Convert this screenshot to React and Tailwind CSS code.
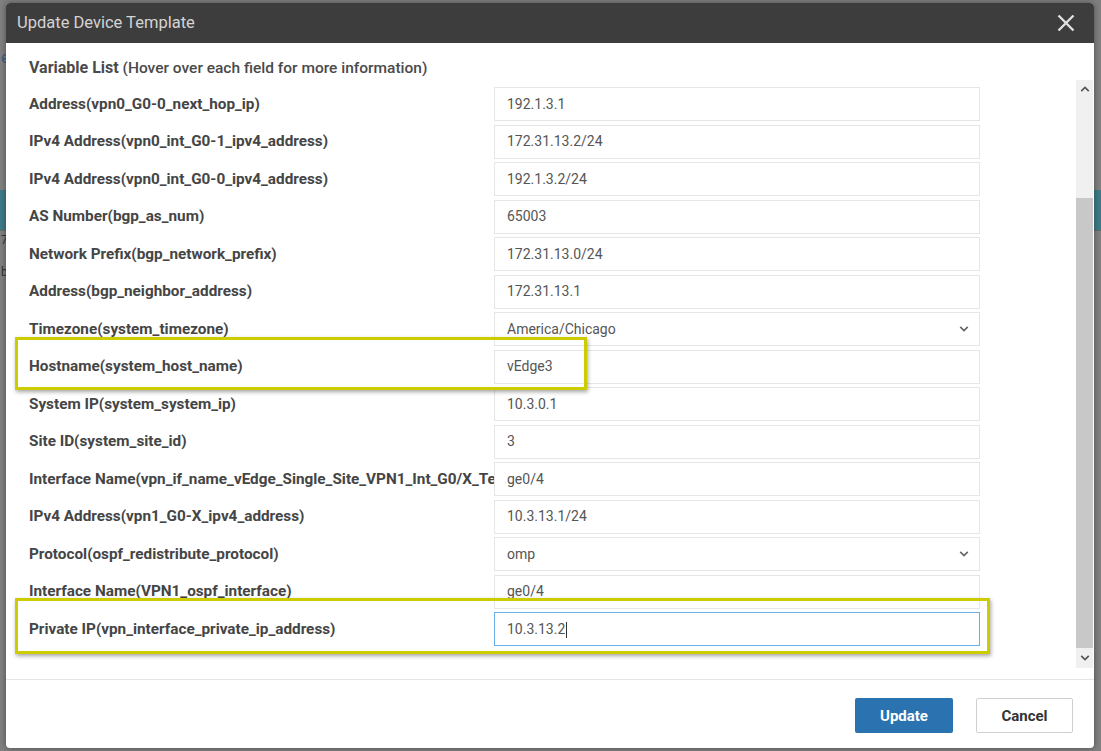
import React from "react";

const rows = [
  { label: "Address(vpn0_G0-0_next_hop_ip)", value: "192.1.3.1" },
  { label: "IPv4 Address(vpn0_int_G0-1_ipv4_address)", value: "172.31.13.2/24" },
  { label: "IPv4 Address(vpn0_int_G0-0_ipv4_address)", value: "192.1.3.2/24" },
  { label: "AS Number(bgp_as_num)", value: "65003" },
  { label: "Network Prefix(bgp_network_prefix)", value: "172.31.13.0/24" },
  { label: "Address(bgp_neighbor_address)", value: "172.31.13.1" },
  { label: "Timezone(system_timezone)", value: "America/Chicago", select: true },
  { label: "Hostname(system_host_name)", value: "vEdge3" },
  { label: "System IP(system_system_ip)", value: "10.3.0.1" },
  { label: "Site ID(system_site_id)", value: "3" },
  { label: "Interface Name(vpn_if_name_vEdge_Single_Site_VPN1_Int_G0/X_Template)", value: "ge0/4" },
  { label: "IPv4 Address(vpn1_G0-X_ipv4_address)", value: "10.3.13.1/24" },
  { label: "Protocol(ospf_redistribute_protocol)", value: "omp", select: true },
  { label: "Interface Name(VPN1_ospf_interface)", value: "ge0/4" },
  { label: "Private IP(vpn_interface_private_ip_address)", value: "10.3.13.2", focus: true },
];

function Chevron({ dir = "down", className = "" }) {
  return (
    <svg width="12" height="8" viewBox="0 0 12 8" className={className}>
      {dir === "down" ? (
        <path d="M1.5 1.5 L6 6 L10.5 1.5" fill="none" stroke="currentColor" strokeWidth="2" />
      ) : (
        <path d="M1.5 6.5 L6 2 L10.5 6.5" fill="none" stroke="currentColor" strokeWidth="2" />
      )}
    </svg>
  );
}

export default function App() {
  return (
    <div
      className="relative w-[1101px] h-[751px] overflow-hidden bg-[#808080]"
      style={{ fontFamily: "Roboto, 'Noto Sans', sans-serif" }}
    >
      {/* dimmed page behind */}
      <div className="absolute left-0 top-[190px] w-full h-[40px] bg-[#3f7a88]" />
      <div className="absolute left-0 top-[230px] w-full h-[1px] bg-[#6a6a6a]" />
      <div className="absolute left-[1px] top-[48px] text-[16px] leading-[20px] text-[#3a5f86]">e</div>
      <div className="absolute left-[1px] top-[232px] text-[12px] leading-[16px] text-[#333]">7</div>
      <div className="absolute left-[1px] top-[264px] text-[12px] leading-[16px] text-[#333]">b</div>

      {/* modal */}
      <div className="absolute left-[6px] top-[3px] w-[1088px] h-[745px] bg-white rounded-[4px] shadow-[0_0_6px_rgba(0,0,0,0.4)] flex flex-col overflow-hidden">
        <div className="h-[40px] shrink-0 bg-[#3d3d3d] flex items-center justify-between pl-[11px] pr-[19px]">
          <span className="text-[16.5px] text-[#d4d4d4]">Update Device Template</span>
          <svg width="18" height="18" viewBox="0 0 18 18">
            <path d="M1.5 1.5 L16.5 16.5 M16.5 1.5 L1.5 16.5" stroke="#e0e0e0" strokeWidth="2.4" />
          </svg>
        </div>

        <div className="h-[37px] shrink-0 pl-[23px] pt-[15px] leading-[20px] text-[#4a4a4a]">
          <span className="text-[16px] font-bold">Variable List</span>
          <span className="text-[15.5px] font-medium"> (Hover over each field for more information)</span>
        </div>

        <div className="relative h-[588px] shrink-0 flex">
          <div className="flex-1 overflow-hidden pl-[23px] pt-[7px] flex flex-col gap-[3.5px]">
            {rows.map((r) => (
              <div key={r.label} className="flex items-center h-[34px] shrink-0">
                <div className="w-[465px] shrink-0 overflow-hidden whitespace-nowrap text-[15.3px] font-bold text-[#454545]">
                  {r.label}
                </div>
                <div
                  className={
                    "w-[486px] h-[34px] shrink-0 flex items-center justify-between pl-[12px] pr-[10px] text-[14px] text-[#555] bg-white border " +
                    (r.focus ? "border-[#66afe9]" : "border-[#e6e6e6]")
                  }
                >
                  <span>
                    {r.value}
                    {r.focus && <span className="inline-block w-[1px] h-[16px] bg-[#333] align-middle ml-[1px]" />}
                  </span>
                  {r.select && <Chevron className="text-[#666] w-[10px]" />}
                </div>
              </div>
            ))}
          </div>

          {/* scrollbar */}
          <div className="w-[17px] mr-[1px] shrink-0 bg-[#f0f0f0] flex flex-col">
            <div className="h-[17px] flex items-center justify-center text-[#555]">
              <Chevron dir="up" className="w-[10px]" />
            </div>
            <div className="h-[101px]" />
            <div className="h-[450px] bg-[#c8c8c8]" />
            <div className="flex-1 flex items-center justify-center text-[#555]">
              <Chevron className="w-[10px]" />
            </div>
          </div>

          {/* highlight boxes */}
          <div className="absolute left-[9px] top-[257px] w-[572px] h-[53px] border-[3px] border-[#cccc00] shadow-[1px_2px_4px_rgba(0,0,0,0.35)]" />
          <div className="absolute left-[9px] top-[518px] w-[975px] h-[56px] border-[3px] border-[#cccc00] shadow-[1px_2px_4px_rgba(0,0,0,0.35)]" />
        </div>

        <div className="mt-[11px] border-t border-[#e5e5e5] flex-1 flex justify-end items-start pt-[18px] pr-[21px] gap-[23px]">
          <button className="w-[98px] h-[35px] bg-[#2a72b0] text-white text-[15px] font-bold rounded-[2px] pt-[2px]">
            Update
          </button>
          <button className="w-[97px] h-[35px] bg-white border border-[#cfcfcf] text-[#333] text-[15px] font-bold rounded-[2px] pt-[2px]">
            Cancel
          </button>
        </div>
      </div>
    </div>
  );
}
